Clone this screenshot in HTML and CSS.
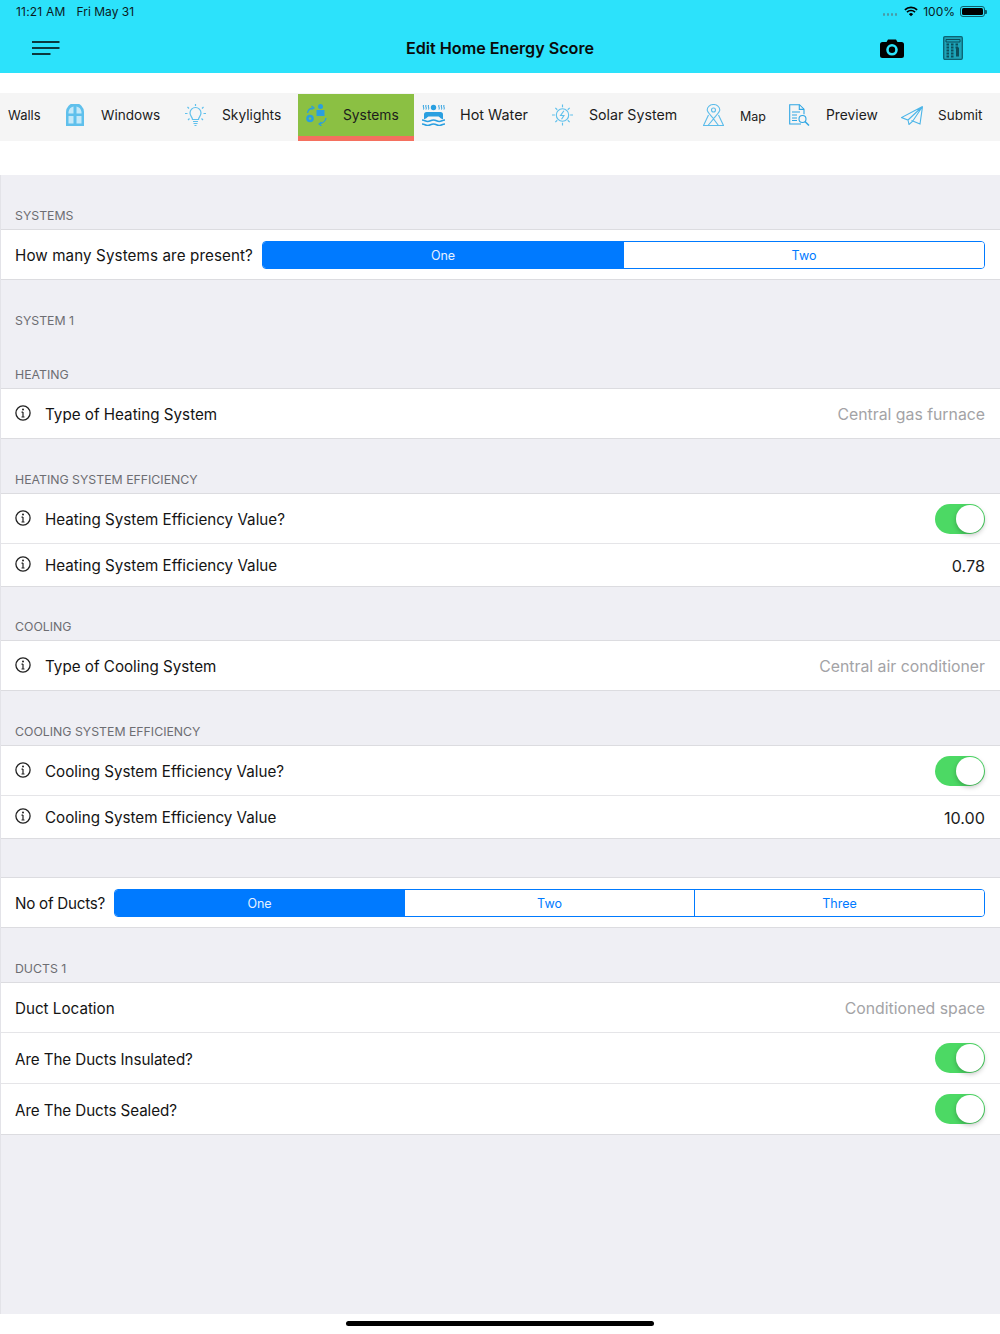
FILE: index.html
```html
<!DOCTYPE html>
<html lang="en">
<head>
<meta charset="utf-8">
<title>Edit Home Energy Score</title>
<link rel="stylesheet" href="styles.css">
</head>
<body>
<div class="app">
  <header class="topbar">
    <div class="status">
      <div class="status-left"><span class="clock">11:21 AM</span><span>Fri May 31</span></div>
      <div class="status-right">
        <span class="dots"><i></i><i></i><i></i><i></i></span>
        <svg class="wifi" viewBox="0 0 16 12" width="14" height="11"><path d="M1 4.2a10 10 0 0 1 14 0" fill="none" stroke="#000" stroke-width="1.9"/><path d="M3.4 6.7a6.6 6.6 0 0 1 9.2 0" fill="none" stroke="#000" stroke-width="1.9"/><path d="M8 11.5 5.6 9a3.4 3.4 0 0 1 4.8 0z" fill="#000"/></svg>
        <span class="pct">100%</span>
        <span class="battery"><b></b></span>
      </div>
    </div>
    <div class="navrow">
      <svg class="menu" viewBox="0 0 28 14" width="28" height="14"><path d="M0 1h27.500M0 7h27.500M0 13h18.500" stroke="#000" stroke-width="1.500" fill="none"/></svg>
      <h1 class="title">Edit Home Energy Score</h1>
      <div class="nav-actions">
        <svg viewBox="0 0 24 19" width="24" height="19"><path fill-rule="evenodd" d="M2.500 3H6.500L8 .5h8L17.500 3h4A2.500 2.500 0 0 1 24 5.500v11a2.500 2.500 0 0 1-2.500 2.500h-19A2.500 2.500 0 0 1 0 16.500v-11A2.500 2.500 0 0 1 2.500 3zM12 5a5.800 5.800 0 1 0 0 11.600A5.800 5.800 0 0 0 12 5z" fill="#000"/><circle cx="12" cy="10.800" r="3.200" fill="#000"/></svg>
        <svg viewBox="0 0 20 24" width="20" height="24"><rect x=".7" y=".7" width="18.600" height="22.600" rx="1.200" fill="#1da4b8" stroke="#0b6373" stroke-width="1.300"/><path d="M3 3.500h14v2.500H3z" fill="none" stroke="#0b4f5c"/><path d="M3.500 8.500h2.500M8 8.500h2.500M12.500 8.500h2.500M3.500 11.500h2.500M8 11.500h2.500M12.500 11.500h2.500M3.500 14.500h2.500M8 14.500h2.500M3.500 17.500h2.500M8 17.500h2.500M3.500 20.500h2.500M8 20.500h2.500" stroke="#0b4f5c" stroke-width="2"/><path d="M14.500 11.500v9" stroke="#0b4f5c" stroke-width="3"/></svg>
      </div>
    </div>
  </header>

  <nav class="tabs">
    <div class="tab tab-walls"><span class="tab-label">Walls</span></div>
    <div class="tab tab-windows">
      <svg class="tab-icon" viewBox="0 0 18 22" width="18" height="22"><path d="M0 22V8a9 9 0 0 1 18 0v14z" fill="#5fc0ec"/><path d="M2.500 9.500h5V2.600A6.600 6.600 0 0 0 2.500 8zm8 0h5V8a6.600 6.600 0 0 0-5-5.400zM2.500 12v7.500h5V12zm8 0v7.500h5V12z" fill="#c4e8f8"/></svg>
      <span class="tab-label">Windows</span>
    </div>
    <div class="tab tab-skylights">
      <svg class="tab-icon" viewBox="0 0 21 22" width="21" height="22" fill="none" stroke="#5fc0ec" stroke-width="1.200"><path d="M7.500 15.500c0-2.500-2.500-3.500-2.500-6.500a5.500 5.500 0 0 1 11 0c0 3-2.500 4-2.500 6.500z"/><path d="M8 17.500h5M8.500 19.500h4M9.500 21.500h2M10.500 0v2M2.500 3 4 4.500M18.500 3 17 4.500M0 9.500h2.500M18.500 9.500H21M3 16l1.500-1.500M18 16l-1.500-1.500"/></svg>
      <span class="tab-label">Skylights</span>
    </div>
    <div class="tab tab-systems">
      <svg class="tab-icon" viewBox="0 0 21 22" width="21" height="22"><circle cx="14.500" cy="2.500" r="2.500" fill="#2a9fe0"/><path d="M10.500 6h8v6h-8z" fill="#2a9fe0"/><circle cx="4" cy="14.500" r="3.800" fill="#2a9fe0"/><circle cx="4" cy="14.500" r="1.300" fill="#8bc043"/><path d="M1.500 9c.5-3 2.500-4.500 5-5M20 14c-.5 3-2.500 5-6.500 6" fill="none" stroke="#2a9fe0" stroke-width="1.300"/><path d="M5.500 2 8 4 5.500 5.500M15.500 18 13 20l2.500 2" fill="none" stroke="#2a9fe0" stroke-width="1.200"/></svg>
      <span class="tab-label">Systems</span>
    </div>
    <div class="tab tab-water">
      <svg class="tab-icon" viewBox="0 0 23 22" width="23" height="22"><circle cx="11.500" cy="3.500" r="2.700" fill="#2a9fe0"/><path d="M1.500 1c-1 1.500 1 2.500 0 4.500M4 1C3 2.500 5 3.500 4 5.500M6.500 1c-1 1.500 1 2.500 0 4.500M17 1c-1 1.500 1 2.500 0 4.500M19.500 1c-1 1.500 1 2.500 0 4.500M22 1c-1 1.500 1 2.500 0 4.500" fill="none" stroke="#2a9fe0" stroke-width="1"/><path d="M2 15v-4.500A2.500 2.500 0 0 1 4.500 8h14a2.500 2.500 0 0 1 2.500 2.500V15c-3 0-3-2.500-5-2.500H7c-2 0-2 2.500-5 2.500z" fill="#2a9fe0"/><path d="M0 16c3 0 3 1.500 5.700 1.500S8.500 16 11.500 16s3 1.500 5.700 1.500S20 16 23 16M0 20c3 0 3 1.500 5.700 1.500S8.500 20 11.500 20s3 1.500 5.700 1.500S20 20 23 20" fill="none" stroke="#2a9fe0" stroke-width="1.600"/></svg>
      <span class="tab-label">Hot Water</span>
    </div>
    <div class="tab tab-solar">
      <svg class="tab-icon" viewBox="0 0 22 22" width="21" height="22" fill="none" stroke="#5fc0ec" stroke-width="1.200"><circle cx="11" cy="11" r="6.500"/><path d="M11 0v3M11 19v3M0 11h3M19 11h3M3.500 3.500l2 2M16.500 16.500l2 2M18.500 3.500l-2 2M5.500 16.500l-2 2M12.500 6.500 9 11.500h3.500L10 15.500"/></svg>
      <span class="tab-label">Solar System</span>
    </div>
    <div class="tab tab-map">
      <svg class="tab-icon" viewBox="0 0 21 22" width="21" height="22" fill="none" stroke="#5cbcea" stroke-width="1.100"><path d="M10.500 14.500C7 10.500 4.200 8 4.200 6a6.300 5.500 0 0 1 12.600 0c0 2-2.800 4.500-6.300 8.500z"/><circle cx="10.500" cy="6" r="2"/><path d="M5.500 11 .5 21.500h20L15.500 11M5 21.500l5.500-6.500 5 6.500"/></svg>
      <span class="tab-label label-small">Map</span>
    </div>
    <div class="tab tab-preview">
      <svg class="tab-icon" viewBox="0 0 21 22" width="21" height="22" fill="none" stroke="#2fa6e4" stroke-width="1.100"><path d="M12 20H.7V.7h9.800l4.500 4.500v5"/><path d="M10.300.7v4.700H15M3 8h8M3 11h5M3 14h5M3 16.500h5"/><circle cx="13.500" cy="15" r="3.500"/><path d="m16 17.500 4 4" stroke-width="1.500"/></svg>
      <span class="tab-label">Preview</span>
    </div>
    <div class="tab tab-submit">
      <svg class="tab-icon" viewBox="0 0 22 19" width="22" height="19" fill="none" stroke="#4cb5e8" stroke-width="1.100"><path d="M21.500.5.500 11.500l6.500 2.500zM21.500.5 7 14l1 4.500 3.500-3zM21.500.5 19 18l-8.500-3.500"/></svg>
      <span class="tab-label">Submit</span>
    </div>
  </nav>

  <main class="form">
    <h2 class="section-label">SYSTEMS</h2>
    <section class="group">
      <div class="row row-seg">
        <span class="label label-long">How many Systems are present?</span>
        <div class="seg seg-systems"><span class="seg-item on">One</span><span class="seg-item">Two</span></div>
      </div>
    </section>

    <h2 class="section-label label-system">SYSTEM 1</h2>
    <h2 class="section-label label-heating">HEATING</h2>
    <section class="group">
      <div class="row">
        <svg class="info" viewBox="0 0 16 16" width="16" height="16"><circle cx="8" cy="8" r="7.100" fill="none" stroke="#222" stroke-width="1.300"/><path d="M8 7v5M6.500 7.200H8M6.500 12h3" stroke="#222" stroke-width="1.200" fill="none"/><circle cx="8" cy="4.500" r="1" fill="#222"/></svg>
        <span class="label">Type of Heating System</span>
        <span class="value muted">Central gas furnace</span>
      </div>
    </section>

    <h2 class="section-label">HEATING SYSTEM EFFICIENCY</h2>
    <section class="group">
      <div class="row">
        <svg class="info" viewBox="0 0 16 16" width="16" height="16"><circle cx="8" cy="8" r="7.100" fill="none" stroke="#222" stroke-width="1.300"/><path d="M8 7v5M6.500 7.200H8M6.500 12h3" stroke="#222" stroke-width="1.200" fill="none"/><circle cx="8" cy="4.500" r="1" fill="#222"/></svg>
        <span class="label">Heating System Efficiency Value?</span>
        <span class="switch"></span>
      </div>
      <div class="row row-short">
        <svg class="info" viewBox="0 0 16 16" width="16" height="16"><circle cx="8" cy="8" r="7.100" fill="none" stroke="#222" stroke-width="1.300"/><path d="M8 7v5M6.500 7.200H8M6.500 12h3" stroke="#222" stroke-width="1.200" fill="none"/><circle cx="8" cy="4.500" r="1" fill="#222"/></svg>
        <span class="label">Heating System Efficiency Value</span>
        <span class="value">0.78</span>
      </div>
    </section>

    <h2 class="section-label label-cooling">COOLING</h2>
    <section class="group">
      <div class="row">
        <svg class="info" viewBox="0 0 16 16" width="16" height="16"><circle cx="8" cy="8" r="7.100" fill="none" stroke="#222" stroke-width="1.300"/><path d="M8 7v5M6.500 7.200H8M6.500 12h3" stroke="#222" stroke-width="1.200" fill="none"/><circle cx="8" cy="4.500" r="1" fill="#222"/></svg>
        <span class="label">Type of Cooling System</span>
        <span class="value muted">Central air conditioner</span>
      </div>
    </section>

    <h2 class="section-label">COOLING SYSTEM EFFICIENCY</h2>
    <section class="group">
      <div class="row">
        <svg class="info" viewBox="0 0 16 16" width="16" height="16"><circle cx="8" cy="8" r="7.100" fill="none" stroke="#222" stroke-width="1.300"/><path d="M8 7v5M6.500 7.200H8M6.500 12h3" stroke="#222" stroke-width="1.200" fill="none"/><circle cx="8" cy="4.500" r="1" fill="#222"/></svg>
        <span class="label">Cooling System Efficiency Value?</span>
        <span class="switch"></span>
      </div>
      <div class="row row-short">
        <svg class="info" viewBox="0 0 16 16" width="16" height="16"><circle cx="8" cy="8" r="7.100" fill="none" stroke="#222" stroke-width="1.300"/><path d="M8 7v5M6.500 7.200H8M6.500 12h3" stroke="#222" stroke-width="1.200" fill="none"/><circle cx="8" cy="4.500" r="1" fill="#222"/></svg>
        <span class="label">Cooling System Efficiency Value</span>
        <span class="value">10.00</span>
      </div>
    </section>

    <section class="group group-ducts">
      <div class="row row-seg">
        <span class="label label-tight">No of Ducts?</span>
        <div class="seg seg-ducts"><span class="seg-item on">One</span><span class="seg-item">Two</span><span class="seg-item">Three</span></div>
      </div>
    </section>

    <h2 class="section-label">DUCTS 1</h2>
    <section class="group">
      <div class="row"><span class="label">Duct Location</span><span class="value muted">Conditioned space</span></div>
      <div class="row row-tall"><span class="label">Are The Ducts Insulated?</span><span class="switch"></span></div>
      <div class="row row-tall"><span class="label">Are The Ducts Sealed?</span><span class="switch"></span></div>
    </section>
  </main>

  <footer class="home"><span class="home-bar"></span></footer>
</div>
</body>
</html>
```

FILE: styles.css
```css
* { box-sizing: border-box; }
html, body { margin: 0; padding: 0; }
body { width: 1000px; height: 1334px; overflow: hidden; background: #fff; font-family: Inter, "Open Sans", sans-serif; color: #111; }
.app { display: flex; flex-direction: column; height: 1334px; }

.topbar { height: 73px; background: #2ce2fb; flex: none; }
.status { height: 23px; padding: 0 15px 0 16px; display: flex; justify-content: space-between; align-items: center; font-size: 12px; color: #0b1a1d; }
.status-left { display: flex; gap: 11px; }
.clock { letter-spacing: .2px; }
.status-right { display: flex; align-items: center; gap: 5px; }
.dots { display: flex; gap: 1.500px; margin-top: 6px; margin-right: 2px; }
.dots i { width: 2.500px; height: 2.500px; border-radius: 50%; background: #4a9aa6; }
.battery { width: 25px; height: 11px; border: 1px solid #0d5e6b; border-radius: 3px; padding: 1px; display: block; position: relative; }
.battery b { display: block; height: 100%; background: #000; border-radius: 1.500px; }
.battery::after { content: ""; position: absolute; right: -2.500px; top: 2.500px; width: 1.500px; height: 4px; background: #0d5e6b; border-radius: 0 1px 1px 0; }
.navrow { height: 50px; display: flex; align-items: center; padding-left: 32px; position: relative; }
.title { position: absolute; left: 0; right: 0; top: 0; margin: 0; line-height: 50px; text-align: center; font-size: 16.150px; font-weight: 600; color: #0a0a0a; }
.menu { position: relative; margin-top: -1px; }
.nav-actions { margin-left: auto; margin-right: 37px; display: flex; align-items: center; gap: 39px; position: relative; }

.tabs { margin-top: 20px; height: 48px; flex: none; background: #f5f5f5; display: grid; grid-template-columns: 58px 119px 121px 116px 130px 151px 86px 112px 107px; }
.tab { display: flex; align-items: center; padding-left: 8px; padding-bottom: 4px; height: 48px; }
.tab-icon { flex: none; margin-right: 16px; }
.tab-label { font-size: 13.800px; color: #1c1c1c; white-space: nowrap; }
.label-small { font-size: 12.500px; margin-top: 2px; }
.tab-systems { background: #8bc043; border-bottom: 5px solid #f5705f; height: 47px; margin-top: 1px; padding-bottom: 0; }
.tab-walls .tab-label { font-size: 13px; }
.tab-submit .tab-label { font-size: 13.500px; }
.tab-windows .tab-icon { margin-right: 17px; }
.tab-water .tab-icon { margin-right: 15px; }
.tab-submit .tab-icon { margin-right: 15px; }
.tab-water .tab-label { font-size: 14.400px; margin-top: -1px; }
.tab-solar .tab-label { font-size: 14.200px; margin-top: -1px; }
.tab-windows .tab-label { font-size: 13.600px; }

.form { margin-top: 34px; flex: 1; background: #efeff4; border-left: 1px solid #e3e3e8; }
.section-label { margin: 33px 0 6px; height: 15px; line-height: 15px; font-size: 12.300px; font-weight: 400; color: #6d6d72; padding-left: 14px; }
.section-label.label-system { margin-bottom: 0; }
.section-label.label-heating { margin-top: 39px; }
.section-label.label-cooling { margin-top: 32px; }
.group { background: #fff; border-top: 1px solid #dcdce0; border-bottom: 1px solid #dcdce0; }
.group-ducts { margin-top: 38px; }
.row { height: 49px; display: flex; align-items: center; padding: 0 15px 0 14px; }
.row + .row { height: 51px; box-shadow: inset 0 1px 0 #e5e5e8; }
.row + .row-short { height: 43px; }
.info { flex: none; margin-right: 14px; margin-top: -2px; }
.label { font-size: 15.200px; color: #141414; white-space: nowrap; margin-top: 2px; }
.label-long { letter-spacing: .1px; }
.label-tight { letter-spacing: -.25px; }
.row-tall .label { margin-top: 3px; letter-spacing: -.08px; }
.value { margin-left: auto; margin-top: 2px; font-size: 16.200px; color: #1c1c1c; white-space: nowrap; }
.value.muted { font-size: 15.800px; color: #a3a3a6; }
.seg { margin-left: auto; height: 28px; display: flex; border: 1px solid #007aff; border-radius: 4px; overflow: hidden; margin-top: 1px; }
.seg-systems { width: 723px; }
.seg-ducts { width: 871px; }
.seg-item { flex: 1; display: flex; align-items: center; justify-content: center; font-size: 12.500px; color: #007aff; background: #fff; }
.seg-item + .seg-item { border-left: 1px solid #007aff; }
.seg-item.on { background: #007aff; color: #e6f1ff; }
.switch { margin-left: auto; width: 50px; height: 30px; border-radius: 15px; background: #4cd964; position: relative; flex: none; }
.switch::after { content: ""; position: absolute; right: 1px; top: 1px; width: 28px; height: 28px; border-radius: 50%; background: #fff; box-shadow: 0 2px 5px rgba(0,0,0,.25); }

.home { height: 20px; flex: none; display: flex; justify-content: center; padding-top: 7px; background: #fff; }
.home-bar { width: 308px; height: 5px; border-radius: 3px; background: #000; display: block; }
```
